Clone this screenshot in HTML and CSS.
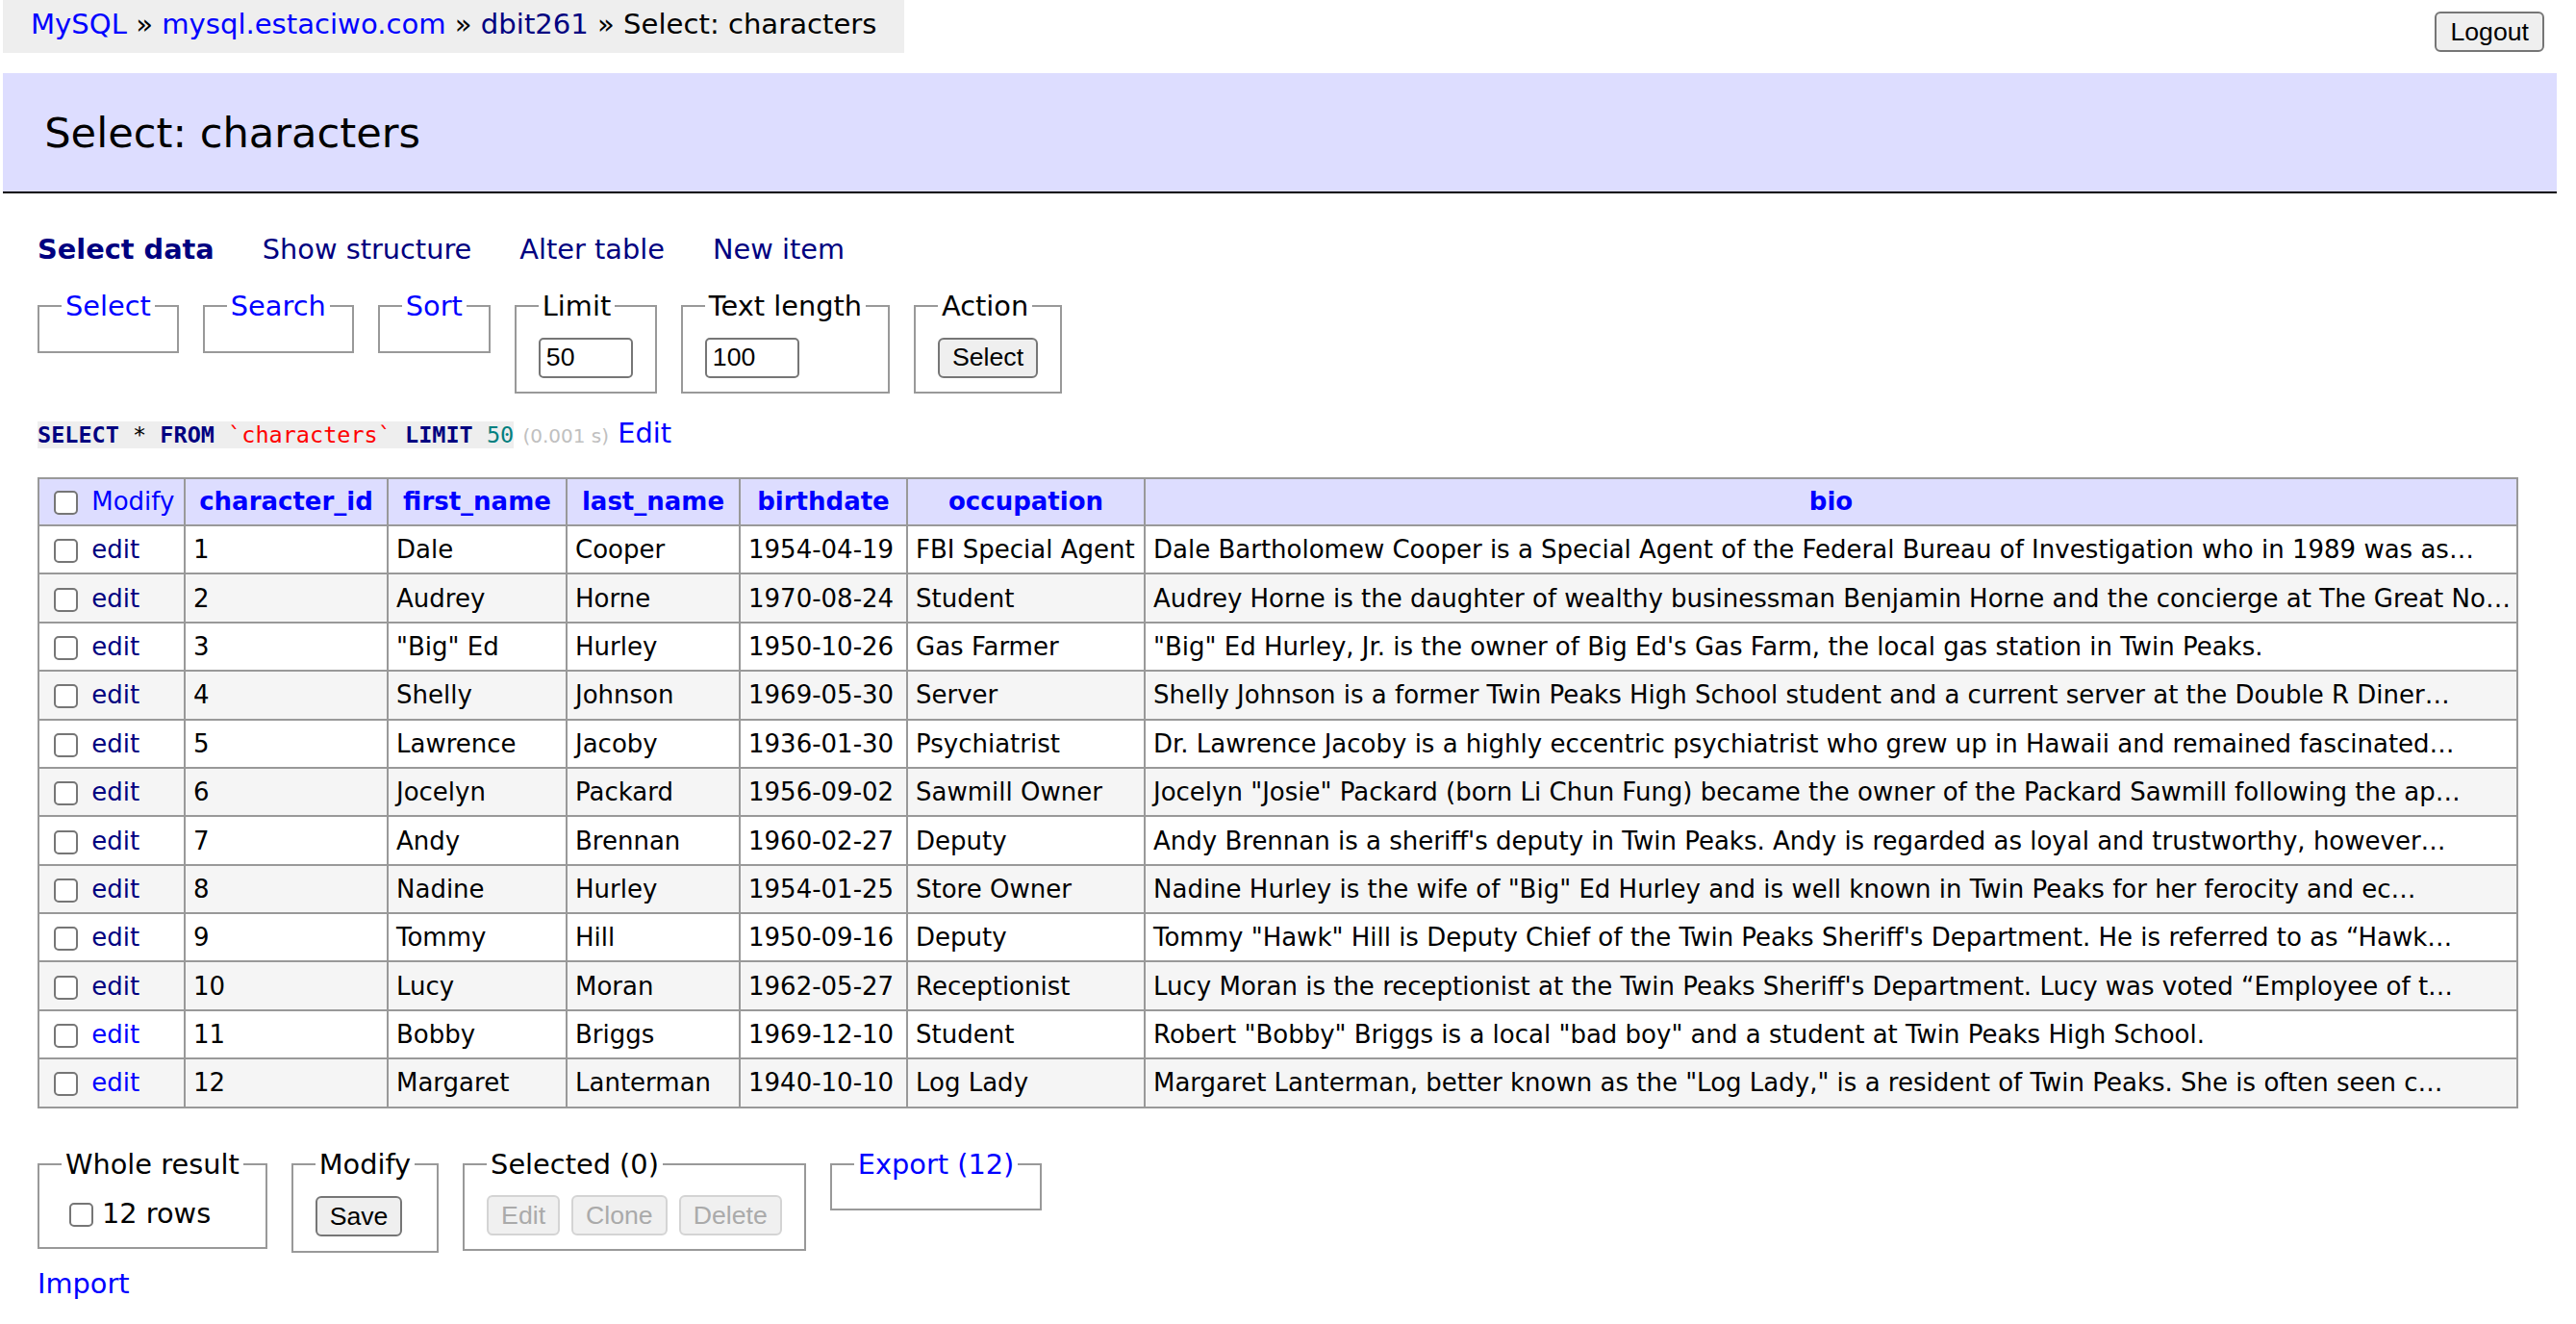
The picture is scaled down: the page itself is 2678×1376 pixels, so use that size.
FILE: index.html
```html
<!DOCTYPE html>
<html lang="en">
<head>
<meta charset="utf-8">
<title>Select: characters - Adminer</title>
<link rel="stylesheet" href="styles.css">
</head>
<body>
<div class="topbar">
  <div class="breadcrumb"><a href="#">MySQL</a> » <a href="#">mysql.estaciwo.com</a> » <a href="#" class="visited">dbit261</a> » Select: characters</div>
  <button class="btn logout" type="button">Logout</button>
</div>
<h2 class="title">Select: characters</h2>
<div class="content">
  <p class="links">
    <a href="#" class="visited active">Select data</a>
    <a href="#" class="visited">Show structure</a>
    <a href="#" class="visited">Alter table</a>
    <a href="#" class="visited">New item</a>
  </p>
  <div class="fs-row">
    <fieldset class="fs"><legend><a href="#">Select</a></legend><div class="fs-empty"></div></fieldset>
    <fieldset class="fs"><legend><a href="#">Search</a></legend><div class="fs-empty"></div></fieldset>
    <fieldset class="fs"><legend><a href="#">Sort</a></legend><div class="fs-empty"></div></fieldset>
    <fieldset class="fs"><legend>Limit</legend><div class="fs-body"><input class="num" type="text" value="50"></div></fieldset>
    <fieldset class="fs"><legend>Text length</legend><div class="fs-body"><input class="num" type="text" value="100"></div></fieldset>
    <fieldset class="fs"><legend>Action</legend><div class="fs-body"><button class="btn" type="button">Select</button></div></fieldset>
  </div>
  <p class="sql"><code class="code"><a href="#" class="kw">SELECT</a> * <a href="#" class="kw">FROM</a> <span class="bac">`characters`</span> <a href="#" class="kw">LIMIT</a> <span class="numlit">50</span></code> <span class="time">(0.001 s)</span> <a href="#">Edit</a></p>

  <table class="grid">
    <colgroup>
      <col class="w-mod"><col class="w-id"><col class="w-first"><col class="w-last"><col class="w-birth"><col class="w-occ"><col class="w-bio">
    </colgroup>
    <thead>
      <tr>
        <td class="modhead"><input class="cb" type="checkbox"> <a href="#">Modify</a></td>
        <th><a href="#">character_id</a></th>
        <th><a href="#">first_name</a></th>
        <th><a href="#">last_name</a></th>
        <th><a href="#">birthdate</a></th>
        <th><a href="#">occupation</a></th>
        <th><a href="#">bio</a></th>
      </tr>
    </thead>
    <tbody>
      <tr><td><input class="cb" type="checkbox"> <a href="#" class="visited">edit</a></td><td>1</td><td>Dale</td><td>Cooper</td><td>1954-04-19</td><td>FBI Special Agent</td><td>Dale Bartholomew Cooper is a Special Agent of the Federal Bureau of Investigation who in 1989 was as…</td></tr>
      <tr class="odd"><td><input class="cb" type="checkbox"> <a href="#" class="visited">edit</a></td><td>2</td><td>Audrey</td><td>Horne</td><td>1970-08-24</td><td>Student</td><td>Audrey Horne is the daughter of wealthy businessman Benjamin Horne and the concierge at The Great No…</td></tr>
      <tr><td><input class="cb" type="checkbox"> <a href="#" class="visited">edit</a></td><td>3</td><td>"Big" Ed</td><td>Hurley</td><td>1950-10-26</td><td>Gas Farmer</td><td>"Big" Ed Hurley, Jr. is the owner of Big Ed's Gas Farm, the local gas station in Twin Peaks.</td></tr>
      <tr class="odd"><td><input class="cb" type="checkbox"> <a href="#" class="visited">edit</a></td><td>4</td><td>Shelly</td><td>Johnson</td><td>1969-05-30</td><td>Server</td><td>Shelly Johnson is a former Twin Peaks High School student and a current server at the Double R Diner…</td></tr>
      <tr><td><input class="cb" type="checkbox"> <a href="#" class="visited">edit</a></td><td>5</td><td>Lawrence</td><td>Jacoby</td><td>1936-01-30</td><td>Psychiatrist</td><td>Dr. Lawrence Jacoby is a highly eccentric psychiatrist who grew up in Hawaii and remained fascinated…</td></tr>
      <tr class="odd"><td><input class="cb" type="checkbox"> <a href="#" class="visited">edit</a></td><td>6</td><td>Jocelyn</td><td>Packard</td><td>1956-09-02</td><td>Sawmill Owner</td><td>Jocelyn "Josie" Packard (born Li Chun Fung) became the owner of the Packard Sawmill following the ap…</td></tr>
      <tr><td><input class="cb" type="checkbox"> <a href="#" class="visited">edit</a></td><td>7</td><td>Andy</td><td>Brennan</td><td>1960-02-27</td><td>Deputy</td><td>Andy Brennan is a sheriff's deputy in Twin Peaks. Andy is regarded as loyal and trustworthy, however…</td></tr>
      <tr class="odd"><td><input class="cb" type="checkbox"> <a href="#" class="visited">edit</a></td><td>8</td><td>Nadine</td><td>Hurley</td><td>1954-01-25</td><td>Store Owner</td><td>Nadine Hurley is the wife of "Big" Ed Hurley and is well known in Twin Peaks for her ferocity and ec…</td></tr>
      <tr><td><input class="cb" type="checkbox"> <a href="#" class="visited">edit</a></td><td>9</td><td>Tommy</td><td>Hill</td><td>1950-09-16</td><td>Deputy</td><td>Tommy "Hawk" Hill is Deputy Chief of the Twin Peaks Sheriff's Department. He is referred to as “Hawk…</td></tr>
      <tr class="odd"><td><input class="cb" type="checkbox"> <a href="#" class="visited">edit</a></td><td>10</td><td>Lucy</td><td>Moran</td><td>1962-05-27</td><td>Receptionist</td><td>Lucy Moran is the receptionist at the Twin Peaks Sheriff's Department. Lucy was voted “Employee of t…</td></tr>
      <tr><td><input class="cb" type="checkbox"> <a href="#">edit</a></td><td>11</td><td>Bobby</td><td>Briggs</td><td>1969-12-10</td><td>Student</td><td>Robert "Bobby" Briggs is a local "bad boy" and a student at Twin Peaks High School.</td></tr>
      <tr class="odd"><td><input class="cb" type="checkbox"> <a href="#">edit</a></td><td>12</td><td>Margaret</td><td>Lanterman</td><td>1940-10-10</td><td>Log Lady</td><td>Margaret Lanterman, better known as the "Log Lady," is a resident of Twin Peaks. She is often seen c…</td></tr>
    </tbody>
  </table>

  <div class="footer">
    <fieldset class="fs"><legend>Whole result</legend><div class="fs-body fs-whole"><label class="rows"><input class="cb cb-all" type="checkbox">12 rows</label></div></fieldset>
    <fieldset class="fs"><legend>Modify</legend><div class="fs-body fs-modify"><button class="btn" type="button">Save</button></div></fieldset>
    <fieldset class="fs"><legend>Selected (0)</legend><div class="fs-body fs-selected"><button class="btn" type="button" disabled>Edit</button><button class="btn" type="button" disabled>Clone</button><button class="btn" type="button" disabled>Delete</button></div></fieldset>
    <fieldset class="fs"><legend><a href="#">Export (12)</a></legend><div class="fs-empty"></div></fieldset>
  </div>
  <p class="import"><a href="#">Import</a></p>
</div>
</body>
</html>
```
FILE: styles.css
```css
* { box-sizing: border-box; }
html, body { background: #fff; }
body {
  margin: 0;
  font: 28.8px/1.25 "DejaVu Sans", Verdana, sans-serif;
  color: #000;
}
a { color: blue; text-decoration: none; }
a.visited { color: navy; }
a.active { font-weight: bold; }

.topbar {
  display: flex;
  justify-content: space-between;
  align-items: flex-start;
}
.breadcrumb {
  margin-left: 3px;
  background: #eee;
  height: 55px;
  line-height: 50px;
  padding: 0 29px;
  font-size: 29.1px;
  white-space: nowrap;
}
.btn {
  font: 26.67px/1 "Liberation Sans", Arial, sans-serif;
  height: 42px;
  padding: 0 13px;
  border: 2px solid #767676;
  border-radius: 6px;
  background: #efefef;
  color: #000;
  margin: 0;
}
.btn:disabled {
  color: #aaa;
  border-color: #d4d4d4;
  background: #f0f0f0;
}
.logout { margin: 12px 33px 0 0; padding: 0 14px; }

.title {
  margin: 21px 20px 0 3px;
  padding: 34.6px 43.2px;
  font-size: 43.2px;
  line-height: 54px;
  font-weight: normal;
  background: #ddf;
  border-bottom: 2px solid #000;
}
.content { padding-left: 39px; }

.links {
  margin: 40px 0 0;
  display: flex;
  gap: 50px;
  line-height: 36px;
}

.fs-row, .footer {
  display: flex;
  align-items: flex-start;
  gap: 25px;
}
.fs-row { margin-top: 23px; }
.footer { margin-top: 40px; }
.fs {
  margin: 0;
  padding: 14.4px 23px;
  border: 2px solid #999;
  min-width: 0;
}
.fs legend {
  padding: 0 4px;
  line-height: 36px;
}
.fs-empty { height: 0; }
.fs-body { display: flex; align-items: center; }
.fs-whole { height: 40px; }
.fs-modify { height: 44px; }
.fs-selected { height: 42px; gap: 12px; }

.num {
  width: 98px;
  height: 42px;
  padding: 0 6px;
  border: 2px solid #767676;
  border-radius: 5px;
  font: 26.67px "Liberation Sans", Arial, sans-serif;
  margin: 0;
}

.sql { margin: 23px 0 0; line-height: 36px; white-space: nowrap; }
.code {
  font: 23.5px "DejaVu Sans Mono", monospace;
  background: #eee;
}
.code .kw { color: navy; font-weight: bold; }
.bac { color: red; }
.numlit { color: #007f7f; }
.time { color: silver; font-size: 20px; }

.grid {
  margin-top: 25px;
  border-collapse: collapse;
  table-layout: fixed;
  width: 2577px;
  font-size: 26px;
  line-height: 32px;
}
.w-mod { width: 152px; }
.w-id { width: 211px; }
.w-first { width: 186px; }
.w-last { width: 180px; }
.w-birth { width: 174px; }
.w-occ { width: 247px; }
.w-bio { width: 1427px; }
.grid td, .grid th {
  border: 2px solid #999;
  padding: 0 8px;
  white-space: nowrap;
  overflow: hidden;
  text-align: left;
}
.grid thead tr { height: 49px; }
.grid tbody tr { height: 50.4px; }
.grid thead td, .grid thead th { background: #ddf; }
.grid thead th { text-align: center; padding: 0 13px; }
.grid .odd td { background: #f5f5f5; }

.cb {
  appearance: none;
  -webkit-appearance: none;
  width: 25px;
  height: 25px;
  border: 2px solid #767676;
  border-radius: 5px;
  background: #fff;
  margin: 0 6px 0 7px;
  vertical-align: middle;
}
.rows { display: flex; align-items: center; }
.cb-all { margin: 0 9px 0 8px; }

.import { margin: 14px 0 0; line-height: 36px; }
```
